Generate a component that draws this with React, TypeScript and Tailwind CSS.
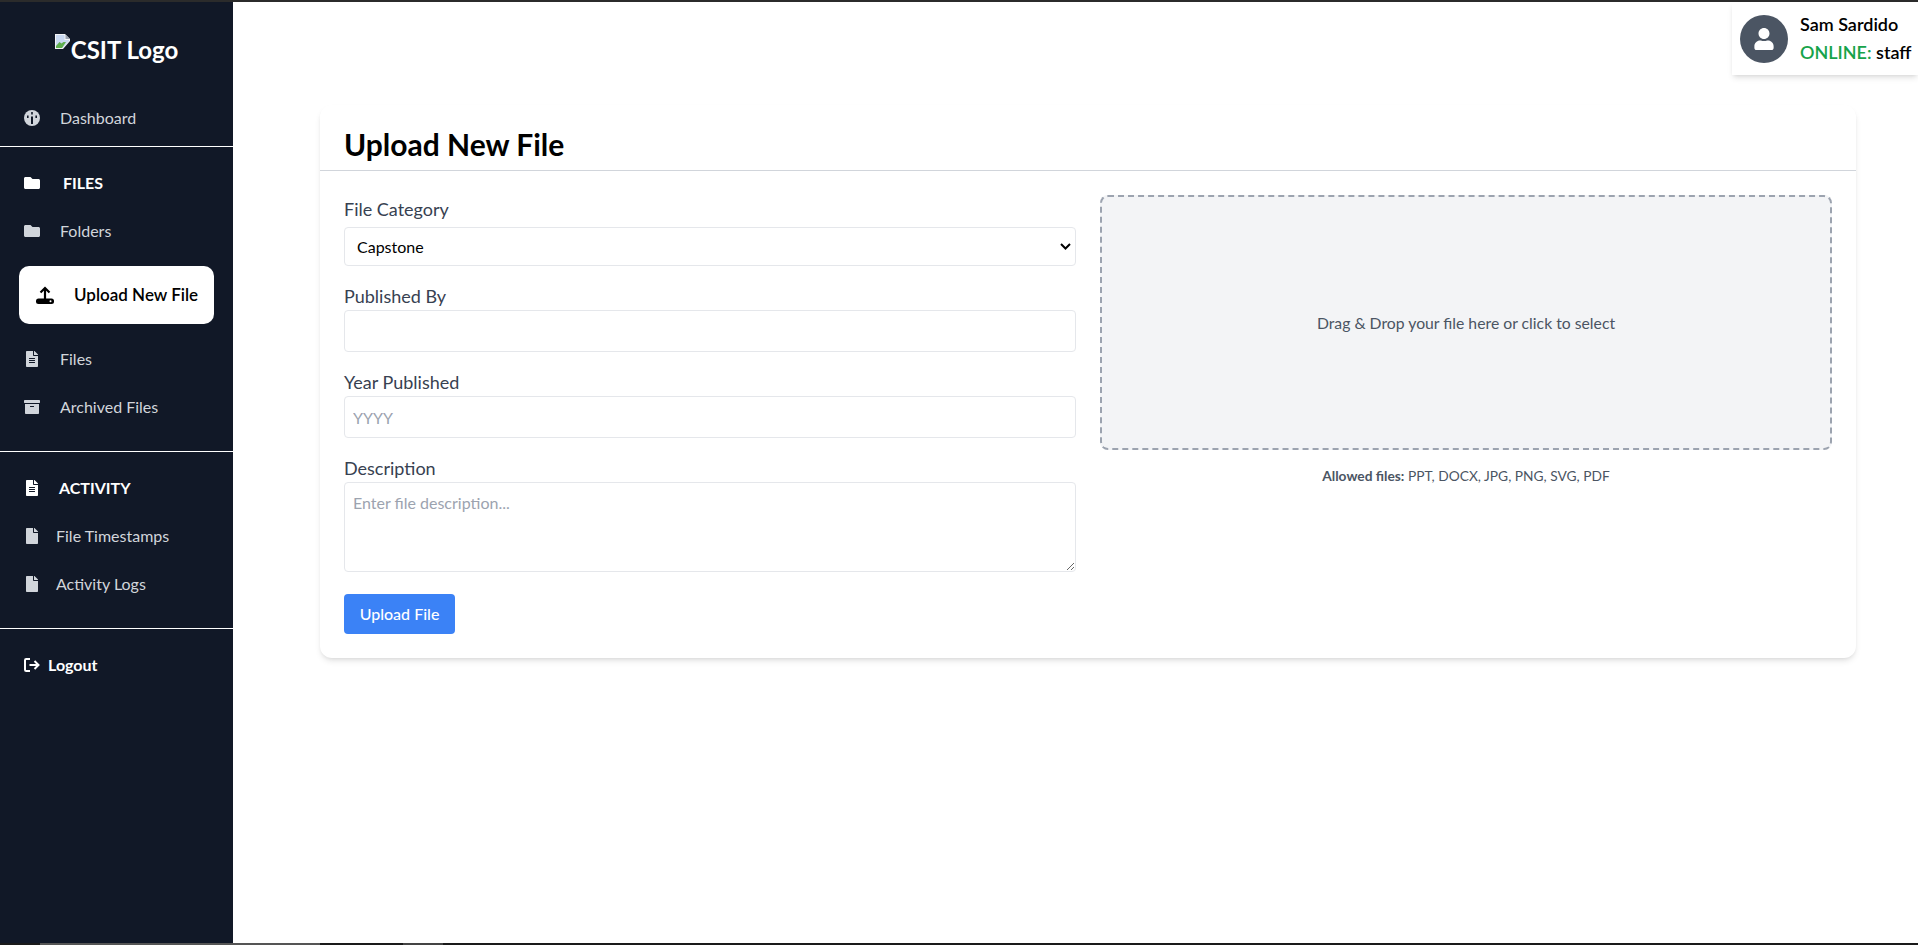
import type { ReactNode } from "react";
import { FaArchive, FaFile, FaFileAlt, FaFolder, FaUser } from "react-icons/fa";

function BrokenImage() {
  return (
    <svg width="16" height="16" viewBox="0 0 16 16" className="shrink-0">
      <path d="M0 0h10l5 5v2L8 15H0z" fill="#f3f4f6" />
      <path d="M1 1h8.5v5H14v1L7.5 14H1z" fill="#c9d8f0" />
      <path d="M1 14v-2l3.5-4 2 1.5 2-1.5 2.5 0-4 6z" fill="#5fae4e" />
      <path d="M10.5 0.5l4.5 4.5h-4.5z" fill="#9ca3af" />
    </svg>
  );
}

// gauge with a straight needle, the icon-pack ones have a slanted one
function DashboardIcon() {
  return (
    <svg width="16" height="16" viewBox="0 0 16 16">
      <circle cx="8" cy="8" r="8" fill="currentColor" />
      <path
        d="M7.2 2h1.6v2.4H7.2zM3 5.5h1.6v2.4H3zM11.4 5.5H13v2.4h-1.6zM7 6.5h2V14H7z"
        fill="#111827"
      />
    </svg>
  );
}

function UploadIcon() {
  return (
    <svg width="18" height="18" viewBox="0 0 18 18" className="shrink-0">
      <path d="M9 13V2M4.5 6.5 9 2l4.5 4.5" fill="none" stroke="currentColor" strokeWidth="2.2" />
      <rect x="0" y="12.5" width="18" height="5.5" rx="2.5" fill="currentColor" />
      <circle cx="14.5" cy="15.2" r="1" fill="#ffffff" />
    </svg>
  );
}

function LogoutIcon() {
  return (
    <svg width="16" height="14" viewBox="0 0 16 14" className="shrink-0">
      <path
        d="M6 1H2.2A1.2 1.2 0 0 0 1 2.2v9.6A1.2 1.2 0 0 0 2.2 13H6M5.5 7h9M10.5 3l4 4-4 4"
        fill="none"
        stroke="currentColor"
        strokeWidth="2"
      />
    </svg>
  );
}

function NavItem({ icon, label, gap }: { icon: ReactNode; label: string; gap: string }) {
  return (
    <a className={`flex h-12 items-center px-6 text-[#d1d5db] ${gap}`}>
      <span className="flex w-4 justify-center text-[16px]">{icon}</span>
      <span className="text-base">{label}</span>
    </a>
  );
}

function SectionTitle({ icon, label, gap }: { icon: ReactNode; label: string; gap: string }) {
  return (
    <div className={`flex h-12 items-center px-6 font-bold text-white ${gap}`}>
      <span className="flex w-4 justify-center text-[16px]">{icon}</span>
      <span className="text-base">{label}</span>
    </div>
  );
}

function Sidebar() {
  return (
    <aside className="flex w-[233px] shrink-0 flex-col bg-[#111827]">
      <div className="flex h-[92px] items-start justify-center pt-[32px]">
        <div className="flex items-start">
          <BrokenImage />
          <span className="text-2xl leading-8 font-bold text-white">CSIT Logo</span>
        </div>
      </div>

      <NavItem icon={<DashboardIcon />} label="Dashboard" gap="gap-5" />
      <div className="mt-1 border-t border-white" />

      <div className="pt-3">
        <SectionTitle icon={<FaFolder />} label="FILES" gap="gap-[23px]" />
        <NavItem icon={<FaFolder />} label="Folders" gap="gap-5" />
        <a className="mx-[19px] mt-[11px] mb-[11px] flex h-[58px] items-center gap-[20px] rounded-[10px] bg-white pl-[17px] font-semibold whitespace-nowrap text-black">
          <UploadIcon />
          <span className="text-[17px]">Upload New File</span>
        </a>
        <NavItem icon={<FaFileAlt />} label="Files" gap="gap-5" />
        <NavItem icon={<FaArchive />} label="Archived Files" gap="gap-5" />
      </div>
      <div className="mt-5 border-t border-white" />

      <div className="pt-3">
        <SectionTitle icon={<FaFileAlt />} label="ACTIVITY" gap="gap-[19px]" />
        <NavItem icon={<FaFile />} label="File Timestamps" gap="gap-4" />
        <NavItem icon={<FaFile />} label="Activity Logs" gap="gap-4" />
      </div>
      <div className="mt-5 border-t border-white" />

      <a className="mt-3 flex h-12 items-center gap-2 px-6 font-bold text-white">
        <LogoutIcon />
        <span className="text-base">Logout</span>
      </a>
    </aside>
  );
}

function UserBadge() {
  return (
    <div className="absolute top-0 right-0 flex h-[73px] w-[186px] items-center gap-3 bg-white pl-2 shadow-md">
      <div className="flex h-12 w-12 items-center justify-center rounded-full bg-[#4b5563] text-white">
        <FaUser className="text-[22px]" />
      </div>
      <div className="pb-[2px] font-semibold">
        <div className="text-lg leading-7 text-black">Sam Sardido</div>
        <div className="text-lg leading-7 text-black">
          <span className="text-[#16a34a]">ONLINE:</span> staff
        </div>
      </div>
    </div>
  );
}

const labelCls = "block text-lg leading-7 text-[#374151]";
const inputCls =
  "block h-[42px] w-full rounded border border-[#e5e7eb] bg-white px-2 text-base text-black outline-none placeholder:text-[#9ca3af]";

function UploadCard() {
  return (
    <section className="rounded-xl bg-white shadow-md">
      <h1 className="h-[66px] border-b border-[#d1d5db] px-6 pt-[21px] text-3xl leading-9 font-bold text-black">
        Upload New File
      </h1>
      <div className="grid grid-cols-2 gap-6 p-6">
        <form className="flex flex-col">
          <label className={labelCls}>File Category</label>
          <div className="relative mt-1">
            <select className="h-[39px] w-full appearance-none rounded border border-[#e5e7eb] bg-white px-3 text-base text-black outline-none">
              <option>Capstone</option>
            </select>
            <svg
              width="11"
              height="7"
              viewBox="0 0 11 7"
              className="pointer-events-none absolute top-[16px] right-[5px]"
            >
              <path d="M1 1l4.5 4.5L10 1" fill="none" stroke="#000000" strokeWidth="2" />
            </svg>
          </div>

          <label className={`${labelCls} mt-4`}>Published By</label>
          <input className={inputCls} />

          <label className={`${labelCls} mt-4`}>Year Published</label>
          <input className={inputCls} placeholder="YYYY" />

          <label className={`${labelCls} mt-4`}>Description</label>
          <textarea
            className="block h-[90px] w-full rounded border border-[#e5e7eb] bg-white px-2 py-2 text-base text-black outline-none placeholder:text-[#9ca3af]"
            placeholder="Enter file description..."
          />

          <button
            type="button"
            className="mt-[22px] h-10 w-[111px] rounded bg-[#3b82f6] text-base font-medium text-white"
          >
            Upload File
          </button>
        </form>

        <div>
          <div className="flex h-[255px] items-center justify-center rounded-lg border-2 border-dashed border-[#9ca3af] bg-[#f3f4f6] text-[15.75px] text-[#4b5563]">
            Drag &amp; Drop your file here or click to select
          </div>
          <p className="mt-4 text-center text-[13.75px] leading-5 text-[#4b5563]">
            <span className="font-bold">Allowed files:</span> PPT, DOCX, JPG, PNG, SVG, PDF
          </p>
        </div>
      </div>
    </section>
  );
}

export default function App() {
  return (
    <div className="flex h-[945px] flex-col overflow-hidden bg-white font-['Lato',sans-serif]">
      <div className="h-[2px] shrink-0 bg-[#2b2b2b]" />
      <div className="relative flex min-h-0 flex-1">
        <Sidebar />
        <main className="flex-1 pt-[103px] pr-[62px] pl-[87px]">
          <UploadCard />
        </main>
        <UserBadge />
      </div>
      <div className="flex h-[2px] shrink-0 bg-[#1a1a1a]">
        <div className="ml-10 w-[280px] bg-[#555555]" />
        <div className="ml-[83px] w-10 bg-[#444444]" />
      </div>
    </div>
  );
}
